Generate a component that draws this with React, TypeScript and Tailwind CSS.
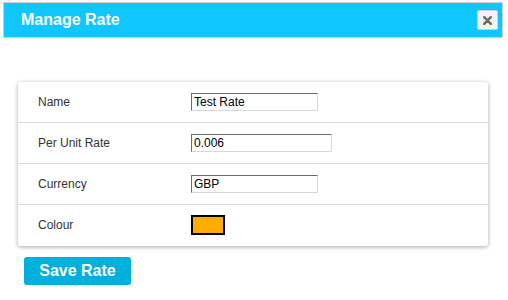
import { useState } from "react";

const rows = [
  { label: "Name", value: "Test Rate", width: "w-[127px]" },
  { label: "Per Unit Rate", value: "0.006", width: "w-[141px]" },
  { label: "Currency", value: "GBP", width: "w-[127px]" },
];

export default function App() {
  const [values, setValues] = useState(rows.map((r) => r.value));

  return (
    <div className="w-[508px] h-[300px] bg-white font-['Liberation_Sans',Arial,sans-serif] pt-[2px]">
      {/* Header */}
      <div className="ml-[3px] w-[500px] h-[36px] bg-[#0fc6ff] border border-[#d0d0d0] flex items-center justify-between pl-[17px] pr-[4px]">
        <h1 className="text-white font-bold text-[16px]">Manage Rate</h1>
        <button className="w-[21px] h-[20px] bg-[#f3f3f3] border border-[#cfcfcf] rounded-[2px] flex items-center justify-center">
          <svg width="9" height="9" viewBox="0 0 9 9">
            <path d="M1.2 1.2 L7.8 7.8 M7.8 1.2 L1.2 7.8" stroke="#6a6a6a" strokeWidth="2.4" strokeLinecap="round" />
          </svg>
        </button>
      </div>

      {/* Form card */}
      <div className="ml-[18px] mt-[44px] w-[470px] bg-white rounded-[3px] shadow-[0_1px_4px_rgba(0,0,0,0.35)]">
        {rows.map((r, i) => (
          <div key={r.label} className="h-[41px] flex items-center border-b border-[#dcdcdc]">
            <label className="w-[173px] pl-[20px] text-[12px] text-[#333]">{r.label}</label>
            <input
              value={values[i]}
              onChange={(e) => setValues(values.map((v, j) => (j === i ? e.target.value : v)))}
              className={`${r.width} h-[18px] px-[2px] text-[12px] text-black border border-t-[#6b6b6b] border-l-[#6b6b6b] border-b-[#d8d8d8] border-r-[#d8d8d8] outline-none`}
            />
          </div>
        ))}
        <div className="h-[41px] flex items-center pb-[1px]">
          <label className="w-[173px] pl-[20px] text-[12px] text-[#333]">Colour</label>
          <div className="w-[34px] h-[20px] bg-[#ffae00] border-2 border-black" />
        </div>
      </div>

      <button className="ml-[24px] mt-[11px] w-[107px] h-[28px] rounded-[3px] bg-[#00b0dc] text-white font-bold text-[16px]">
        Save Rate
      </button>
    </div>
  );
}
